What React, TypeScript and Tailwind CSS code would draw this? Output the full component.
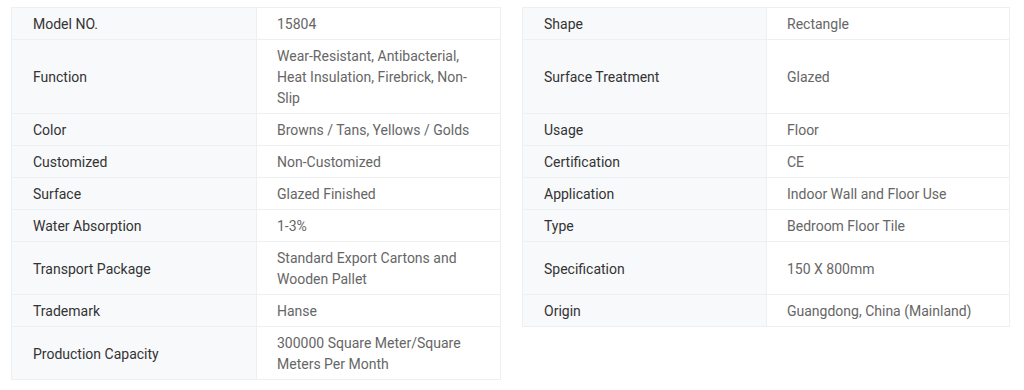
const left: [string, string][] = [
  ['Model NO.', '15804'],
  ['Function', 'Wear-Resistant, Antibacterial, Heat Insulation, Firebrick, Non-Slip'],
  ['Color', 'Browns / Tans, Yellows / Golds'],
  ['Customized', 'Non-Customized'],
  ['Surface', 'Glazed Finished'],
  ['Water Absorption', '1-3%'],
  ['Transport Package', 'Standard Export Cartons and Wooden Pallet'],
  ['Trademark', 'Hanse'],
  ['Production Capacity', '300000 Square Meter/Square Meters Per Month'],
];

const right: [string, string][] = [
  ['Shape', 'Rectangle'],
  ['Surface Treatment', 'Glazed'],
  ['Usage', 'Floor'],
  ['Certification', 'CE'],
  ['Application', 'Indoor Wall and Floor Use'],
  ['Type', 'Bedroom Floor Tile'],
  ['Specification', '150 X 800mm'],
  ['Origin', 'Guangdong, China (Mainland)'],
];

function Cells({ row, first }: { row?: [string, string]; first: boolean }) {
  if (!row) return (<><div /><div /></>);
  const top = first ? 'border-t' : '';
  return (
    <>
      <div className={`flex items-center border-l border-r border-b border-[#edf0f3] bg-[#f8f9fb] pl-[21px] pr-4 pt-[6px] pb-[4px] text-[#333] ${top}`}>
        {row[0]}
      </div>
      <div className={`flex items-center border-r border-b border-[#edf0f3] bg-white pl-[20px] pr-[30px] pt-[6px] pb-[4px] text-[#666] ${top}`}>
        {row[1]}
      </div>
    </>
  );
}

export default function App() {
  return (
    <div className="min-h-[390px] bg-white pl-[11px] pt-[7px]" style={{ fontFamily: 'Roboto, "Liberation Sans", sans-serif' }}>
      <div className="grid grid-cols-[246px_244px_21px_245px_243px] text-[14px] leading-[21px]">
        {left.map((row, i) => (
          <div key={i} className="contents">
            <Cells row={row} first={i === 0} />
            <div />
            <Cells row={right[i]} first={i === 0} />
          </div>
        ))}
      </div>
    </div>
  );
}
